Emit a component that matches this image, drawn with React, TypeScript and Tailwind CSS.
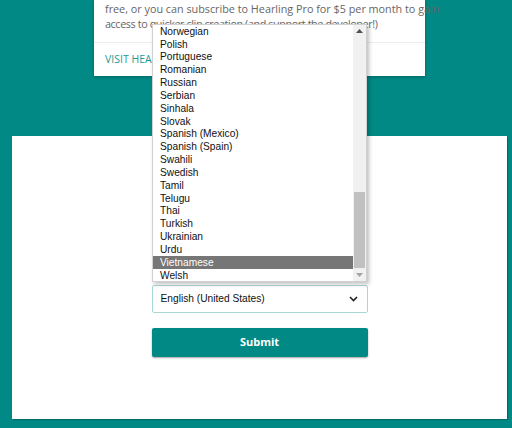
import React from "react";

const langs = [
  "Norwegian",
  "Polish",
  "Portuguese",
  "Romanian",
  "Russian",
  "Serbian",
  "Sinhala",
  "Slovak",
  "Spanish (Mexico)",
  "Spanish (Spain)",
  "Swahili",
  "Swedish",
  "Tamil",
  "Telugu",
  "Thai",
  "Turkish",
  "Ukrainian",
  "Urdu",
  "Vietnamese",
  "Welsh",
];

export default function App() {
  return (
    <div className="relative h-[428px] w-[512px] overflow-hidden bg-[#008985]">
      {/* Top card */}
      <div className="ml-[94px] w-[331px] bg-white shadow-[0_1px_3px_rgba(0,0,0,0.25)] font-['Open_Sans',sans-serif]">
        <div className="px-[11px] pt-[1px] pb-[11px] text-[10.8px] leading-[15px] text-[#666]">
          <div className="whitespace-nowrap">free, or you can subscribe to Hearling Pro for $5 per month to gain</div>
          <div className="whitespace-nowrap tracking-[-0.4px]">access to quicker clip creation (and support the developer!)</div>
        </div>
        <div className="flex h-[34px] items-center border-t border-[#ececec] px-[11px] text-[10.5px] text-[#1f9a96]">
          VISIT HEARLING
        </div>
      </div>

      {/* Bottom panel */}
      <div className="ml-[12px] mt-[60px] flex h-[283px] w-[495px] flex-col items-center bg-white pt-[149px] shadow-[1px_1px_1px_rgba(0,0,0,0.2)]">
        <div className="flex h-[28px] w-[216px] items-center justify-between rounded-[2px] border border-[#a9d6d3] bg-white pl-[8px] pr-[8px] font-['Liberation_Sans',Arial,sans-serif] text-[10.2px] text-[#111]">
          <span>English (United States)</span>
          <svg width="9" height="6" viewBox="0 0 9 6" className="mr-[1px]">
            <path d="M1 1 L4.5 4.5 L8 1" stroke="#222" strokeWidth="1.6" fill="none" />
          </svg>
        </div>
        <button className="mt-[15px] flex h-[29px] w-[216px] items-center justify-center rounded-[2px] bg-[#008985] font-['Open_Sans',sans-serif] text-[11px] font-bold text-white shadow-[0_1px_2px_rgba(0,0,0,0.35)]">
          Submit
        </button>
      </div>

      {/* Dropdown overlay */}
      <div className="absolute left-[152px] top-[24px] flex h-[258px] w-[215px] border border-[#d0d0d0] bg-white shadow-[2px_2px_4px_rgba(0,0,0,0.25)] font-['Liberation_Sans',Arial,sans-serif] text-[10.2px] text-[#111]">
        <div className="flex-1 overflow-hidden">
          {langs.map((l) => (
            <div
              key={l}
              className={
                l === "Vietnamese"
                  ? "flex h-[12.84px] items-center bg-[#767676] pl-[7px] text-white"
                  : "flex h-[12.84px] items-center pl-[7px]"
              }
            >
              {l}
            </div>
          ))}
        </div>
        <div className="flex w-[13px] flex-col items-center bg-[#f1f1f1]">
          <div className="flex h-[12px] items-center justify-center">
            <svg width="7" height="4" viewBox="0 0 7 4">
              <path d="M0 4 L3.5 0 L7 4 Z" fill="#505050" />
            </svg>
          </div>
          <div className="flex-1 w-full px-[1px] pt-[155px] pb-[1px]">
            <div className="h-[76px] w-full bg-[#c1c1c1]" />
          </div>
          <div className="flex h-[12px] items-center justify-center">
            <svg width="7" height="4" viewBox="0 0 7 4">
              <path d="M0 0 L3.5 4 L7 0 Z" fill="#a3a3a3" />
            </svg>
          </div>
        </div>
      </div>
    </div>
  );
}
